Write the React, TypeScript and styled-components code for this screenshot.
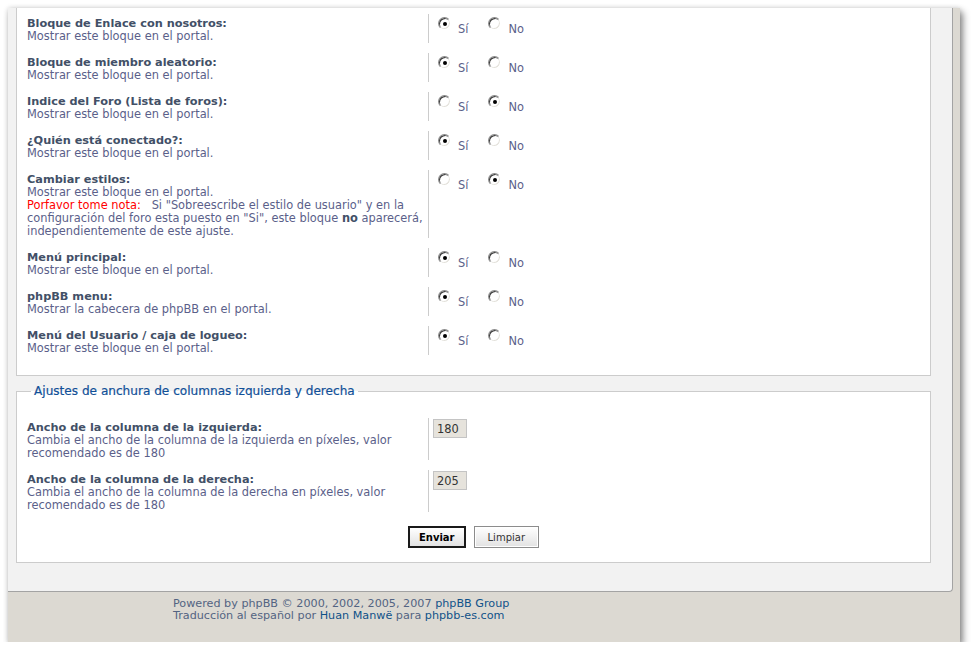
import React from 'react';
import styled, { createGlobalStyle } from 'styled-components';

const GlobalStyle = createGlobalStyle`
	html, body {
		margin: 0;
		padding: 0;
		background: #fff;
	}
	body {
		font-family: "DejaVu Sans", Verdana, sans-serif;
	}
`;

const Window = styled.div`
	margin: 8px 0 0 8px;
	width: 952px;
	height: 634px;
	background: #dcd9d2;
	box-shadow: 3px 4px 7px rgba(0, 0, 0, 0.45), 0 0 5px rgba(0, 0, 0, 0.15);
	display: flex;
	flex-direction: column;
`;

const Viewport = styled.div`
	box-sizing: border-box;
	height: 584px;
	margin-right: 7px;
	padding: 0 21px 0 8px;
	background: #f2f2f2;
	border-right: 1px solid #a3a3a3;
	border-bottom: 1px solid #a3a3a3;
	border-bottom-right-radius: 4px;
	overflow: hidden;
`;

const Panel = styled.fieldset<{ $clipped?: boolean }>`
	margin: ${p => (p.$clipped ? '0' : '8px 0 0')};
	padding: ${p => (p.$clipped ? '6px 10px 10px' : '20px 10px 14px')};
	background: #fff;
	border: 1px solid #cccccc;
	border-top: ${p => (p.$clipped ? 'none' : '1px solid #cccccc')};
	min-width: 0;
`;

const Legend = styled.legend`
	margin-left: 4px;
	padding: 0 3px;
	font-size: 12.1px;
	line-height: 14px;
	color: #115098;
	-webkit-text-stroke: 0.2px #115098;
`;

const Row = styled.div`
	display: flex;
	margin-bottom: 10px;
`;

const Term = styled.div`
	box-sizing: border-box;
	width: 402px;
	flex-shrink: 0;
	padding: 3px 4px 0 0;
	border-right: 1px solid #cccccc;
	font-size: 11.4px;
	line-height: 13px;
	color: #5b5f8a;
`;

const Title = styled.div`
	font-weight: bold;
	font-size: 11.3px;
	color: #425067;
`;

const Note = styled.span`
	color: #ff0000;
`;

const Strong = styled.b`
	color: #425067;
`;

const Choices = styled.div<{ $pad?: string }>`
	display: flex;
	padding: ${p => p.$pad || '3px 0 0 9px'};
`;

const Option = styled.label`
	display: flex;
	align-items: flex-start;
	margin-right: 20px;
	font-size: 11.4px;
	line-height: 13px;
	color: #5b5f8a;
`;

const Radio = styled.span<{ $on?: boolean }>`
	position: relative;
	box-sizing: border-box;
	width: 13px;
	height: 13px;
	flex-shrink: 0;
	border-radius: 50%;
	border: 1px solid;
	border-color: #8a8a8a #ffffff #ffffff #8a8a8a;
	background: #fff;
	box-shadow: inset 1px 1px 0 #3c3c3c, inset -1px -1px 0 #e4e2dc;

	&::after {
		content: '';
		display: ${p => (p.$on ? 'block' : 'none')};
		position: absolute;
		left: 3.5px;
		top: 3.5px;
		width: 4px;
		height: 4px;
		border-radius: 50%;
		background: #000;
	}
`;

const OptionText = styled.span`
	margin-left: 7px;
	padding-top: 6px;
`;

const NumberInput = styled.input`
	box-sizing: border-box;
	width: 34px;
	height: 19px;
	padding: 0 3px;
	border: 1px solid #c4c4c4;
	background: #e6e3dc;
	font-family: "DejaVu Sans", Verdana, sans-serif;
	font-size: 11.4px;
	color: #333;
`;

const ButtonBar = styled.div`
	display: flex;
	justify-content: center;
	gap: 8px;
	padding-top: 4px;
`;

const Button = styled.button<{ $primary?: boolean }>`
	box-sizing: border-box;
	height: 22px;
	padding: 0 ${p => (p.$primary ? '9px' : '13px')};
	font-family: "DejaVu Sans", Verdana, sans-serif;
	font-size: 10px;
	font-weight: ${p => (p.$primary ? 'bold' : 'normal')};
	color: ${p => (p.$primary ? '#000' : '#333')};
	background: linear-gradient(#ffffff, #e2e2e2);
	border: ${p => (p.$primary ? '2px solid #1a1a1a' : '1px solid #8c8c8c')};
	outline: ${p => (p.$primary ? 'none' : '1px solid #fff')};
	outline-offset: -2px;
`;

const Footer = styled.div`
	padding: 6px 0 0 165px;
	font-size: 11.2px;
	line-height: 12px;
	color: #536482;
`;

const Link = styled.a`
	color: #105289;
	text-decoration: none;
`;

type Block = {
	title: string;
	desc: string;
	on: boolean;
	note?: boolean;
};

const blocks: Block[] = [
	{ title: 'Bloque de Enlace con nosotros:', desc: 'Mostrar este bloque en el portal.', on: true },
	{ title: 'Bloque de miembro aleatorio:', desc: 'Mostrar este bloque en el portal.', on: true },
	{ title: 'Indice del Foro (Lista de foros):', desc: 'Mostrar este bloque en el portal.', on: false },
	{ title: '¿Quién está conectado?:', desc: 'Mostrar este bloque en el portal.', on: true },
	{ title: 'Cambiar estilos:', desc: 'Mostrar este bloque en el portal.', on: false, note: true },
	{ title: 'Menú principal:', desc: 'Mostrar este bloque en el portal.', on: true },
	{ title: 'phpBB menu:', desc: 'Mostrar la cabecera de phpBB en el portal.', on: true },
	{ title: 'Menú del Usuario / caja de logueo:', desc: 'Mostrar este bloque en el portal.', on: true },
];

const widths = [
	{
		title: 'Ancho de la columna de la izquierda:',
		desc: 'Cambia el ancho de la columna de la izquierda en píxeles, valor recomendado es de 180',
		value: '180',
	},
	{
		title: 'Ancho de la columna de la derecha:',
		desc: 'Cambia el ancho de la columna de la derecha en píxeles, valor recomendado es de 180',
		value: '205',
	},
];

const YesNo: React.FC<{ on: boolean }> = ({ on }) => (
	<Choices>
		<Option>
			<Radio $on={on} />
			<OptionText>Sí</OptionText>
		</Option>
		<Option>
			<Radio $on={!on} />
			<OptionText>No</OptionText>
		</Option>
	</Choices>
);

export default function App() {
	return (
		<>
			<GlobalStyle />
			<Window>
				<Viewport>
					<Panel $clipped>
						{blocks.map(b => (
							<Row key={b.title}>
								<Term>
									<Title>{b.title}</Title>
									<div>{b.desc}</div>
									{b.note && (
										<div>
											<Note>Porfavor tome nota:</Note>&nbsp;&nbsp; Si "Sobreescribe el estilo de usuario" y en la
											configuración del foro esta puesto en "Si", este bloque <Strong>no</Strong> aparecerá,
											independientemente de este ajuste.
										</div>
									)}
								</Term>
								<YesNo on={b.on} />
							</Row>
						))}
					</Panel>
					<Panel>
						<Legend>Ajustes de anchura de columnas izquierda y derecha</Legend>
						{widths.map(w => (
							<Row key={w.title}>
								<Term>
									<Title>{w.title}</Title>
									<div>{w.desc}</div>
								</Term>
								<Choices $pad="1px 0 0 4px">
									<NumberInput defaultValue={w.value} />
								</Choices>
							</Row>
						))}
						<ButtonBar>
							<Button $primary>Enviar</Button>
							<Button>Limpiar</Button>
						</ButtonBar>
					</Panel>
				</Viewport>
				<Footer>
					Powered by phpBB © 2000, 2002, 2005, 2007 <Link>phpBB Group</Link>
					<br />
					Traducción al español por <Link>Huan Manwë</Link> para <Link>phpbb-es.com</Link>
				</Footer>
			</Window>
		</>
	);
}
